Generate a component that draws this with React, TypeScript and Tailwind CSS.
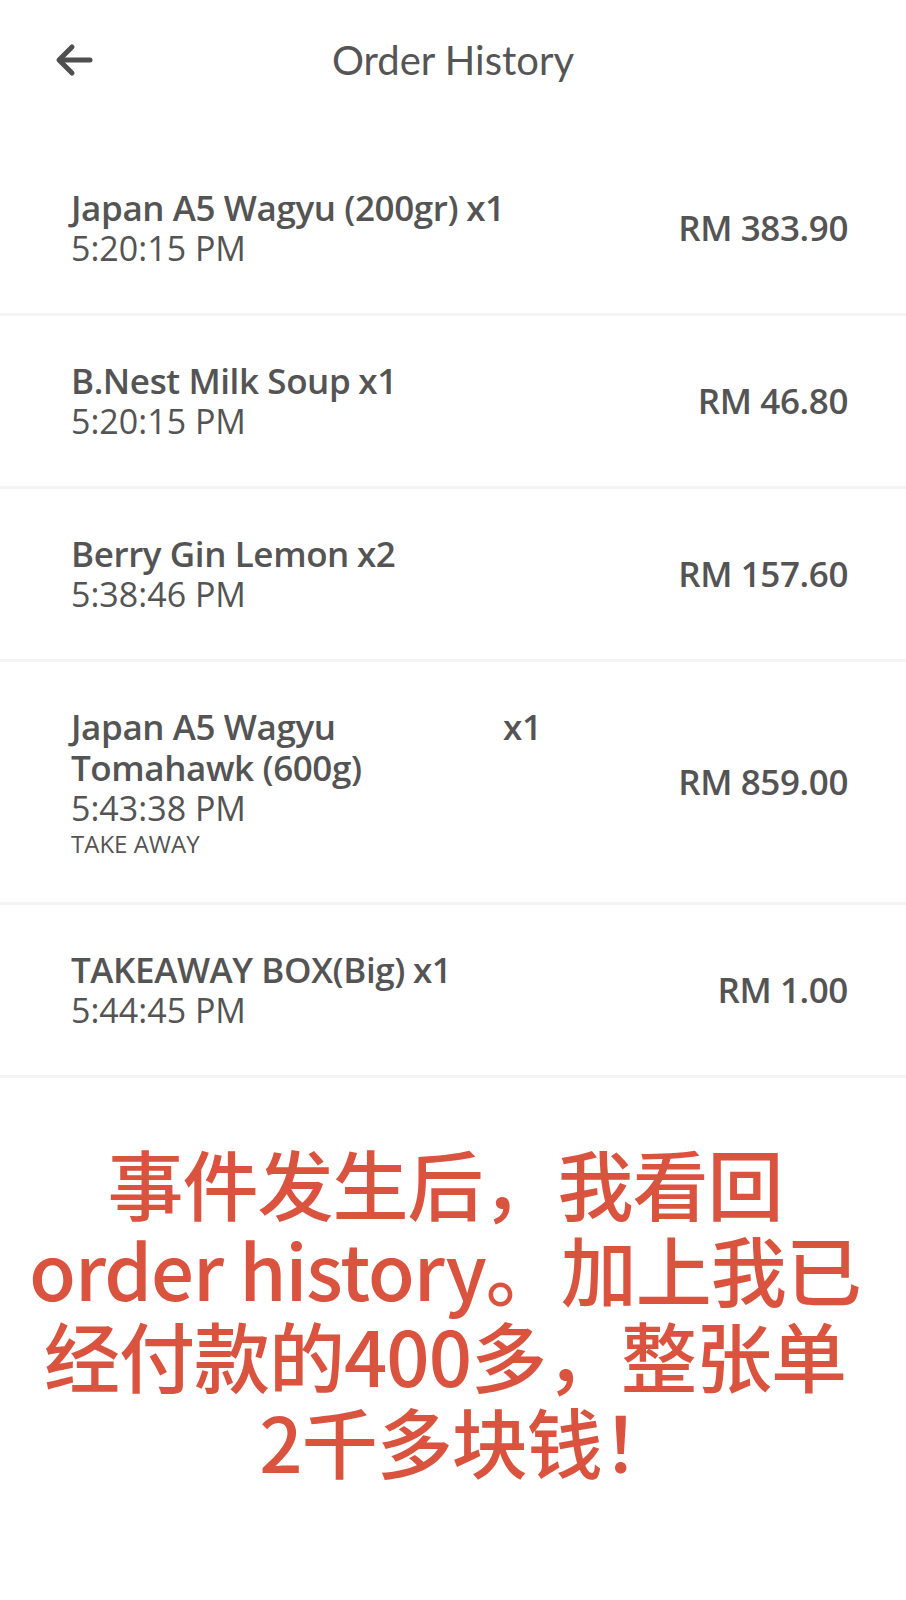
import React from 'react';

type Order = {
  name: string;
  qty: string;
  time: string;
  price: string;
  note?: string;
};

const orders: Order[] = [
  { name: 'Japan A5 Wagyu (200gr)', qty: 'x1', time: '5:20:15 PM', price: 'RM 383.90' },
  { name: 'B.Nest Milk Soup', qty: 'x1', time: '5:20:15 PM', price: 'RM 46.80' },
  { name: 'Berry Gin Lemon', qty: 'x2', time: '5:38:46 PM', price: 'RM 157.60' },
  { name: 'Japan A5 Wagyu Tomahawk (600g)', qty: 'x1', time: '5:43:38 PM', price: 'RM 859.00', note: 'TAKE AWAY' },
  { name: 'TAKEAWAY BOX(Big)', qty: 'x1', time: '5:44:45 PM', price: 'RM 1.00' },
];

function OrderRow({ order }: { order: Order }) {
  return (
    <div className="flex items-center justify-between pl-[71px] pr-[58px] py-[44px] border-b-[3px] border-[#f4f4f4]">
      <div className="flex flex-col">
        <div className="flex items-start gap-[8px] text-[35px] font-semibold leading-[41px] tracking-[-0.4px]">
          <span className="max-w-[424px]">{order.name}</span>
          <span>{order.qty}</span>
        </div>
        <span className="text-[34px] leading-[41px]">{order.time}</span>
        {order.note && <span className="text-[24px] leading-[28px] mt-[1px]">{order.note}</span>}
      </div>
      <span className="text-[35px] font-semibold tracking-[-0.4px]">{order.price}</span>
    </div>
  );
}

export default function App() {
  return (
    <div className="w-[906px] h-[1600px] bg-white text-[#545454]" style={{ fontFamily: '"Open Sans", Lato, sans-serif' }}>
      {/* Header */}
      <div className="relative h-[143px] flex items-start justify-center pt-[34px]">
        <button className="absolute left-[54px] top-[42px] text-[#4f4f4f]">
          <svg width="40" height="36" viewBox="0 0 40 36" fill="none" stroke="currentColor" strokeWidth="5" strokeLinecap="round" strokeLinejoin="round">
            <path d="M36 18H6" />
            <path d="M18 5L5 18l13 13" />
          </svg>
        </button>
        <h1 className="text-[40px] leading-[52px] text-[#555]" style={{ fontFamily: 'Lato, sans-serif' }}>
          Order History
        </h1>
      </div>

      {/* Order list */}
      <div className="flex flex-col">
        {orders.map((o, i) => (
          <OrderRow key={i} order={o} />
        ))}
      </div>

      {/* Caption */}
      <div
        className="mt-[61px] pr-[16px] text-center text-[76px] font-medium leading-[86px] tracking-[-1px] text-[#d9533f]"
        style={{ fontFamily: '"Noto Sans CJK SC", "Noto Sans", sans-serif' }}
      >
        <div>事件发生后，我看回</div>
        <div>order history。加上我已</div>
        <div>经付款的400多，整张单</div>
        <div>
          2千多块钱<span className="mr-[-46px]">！</span>
        </div>
      </div>
    </div>
  );
}
